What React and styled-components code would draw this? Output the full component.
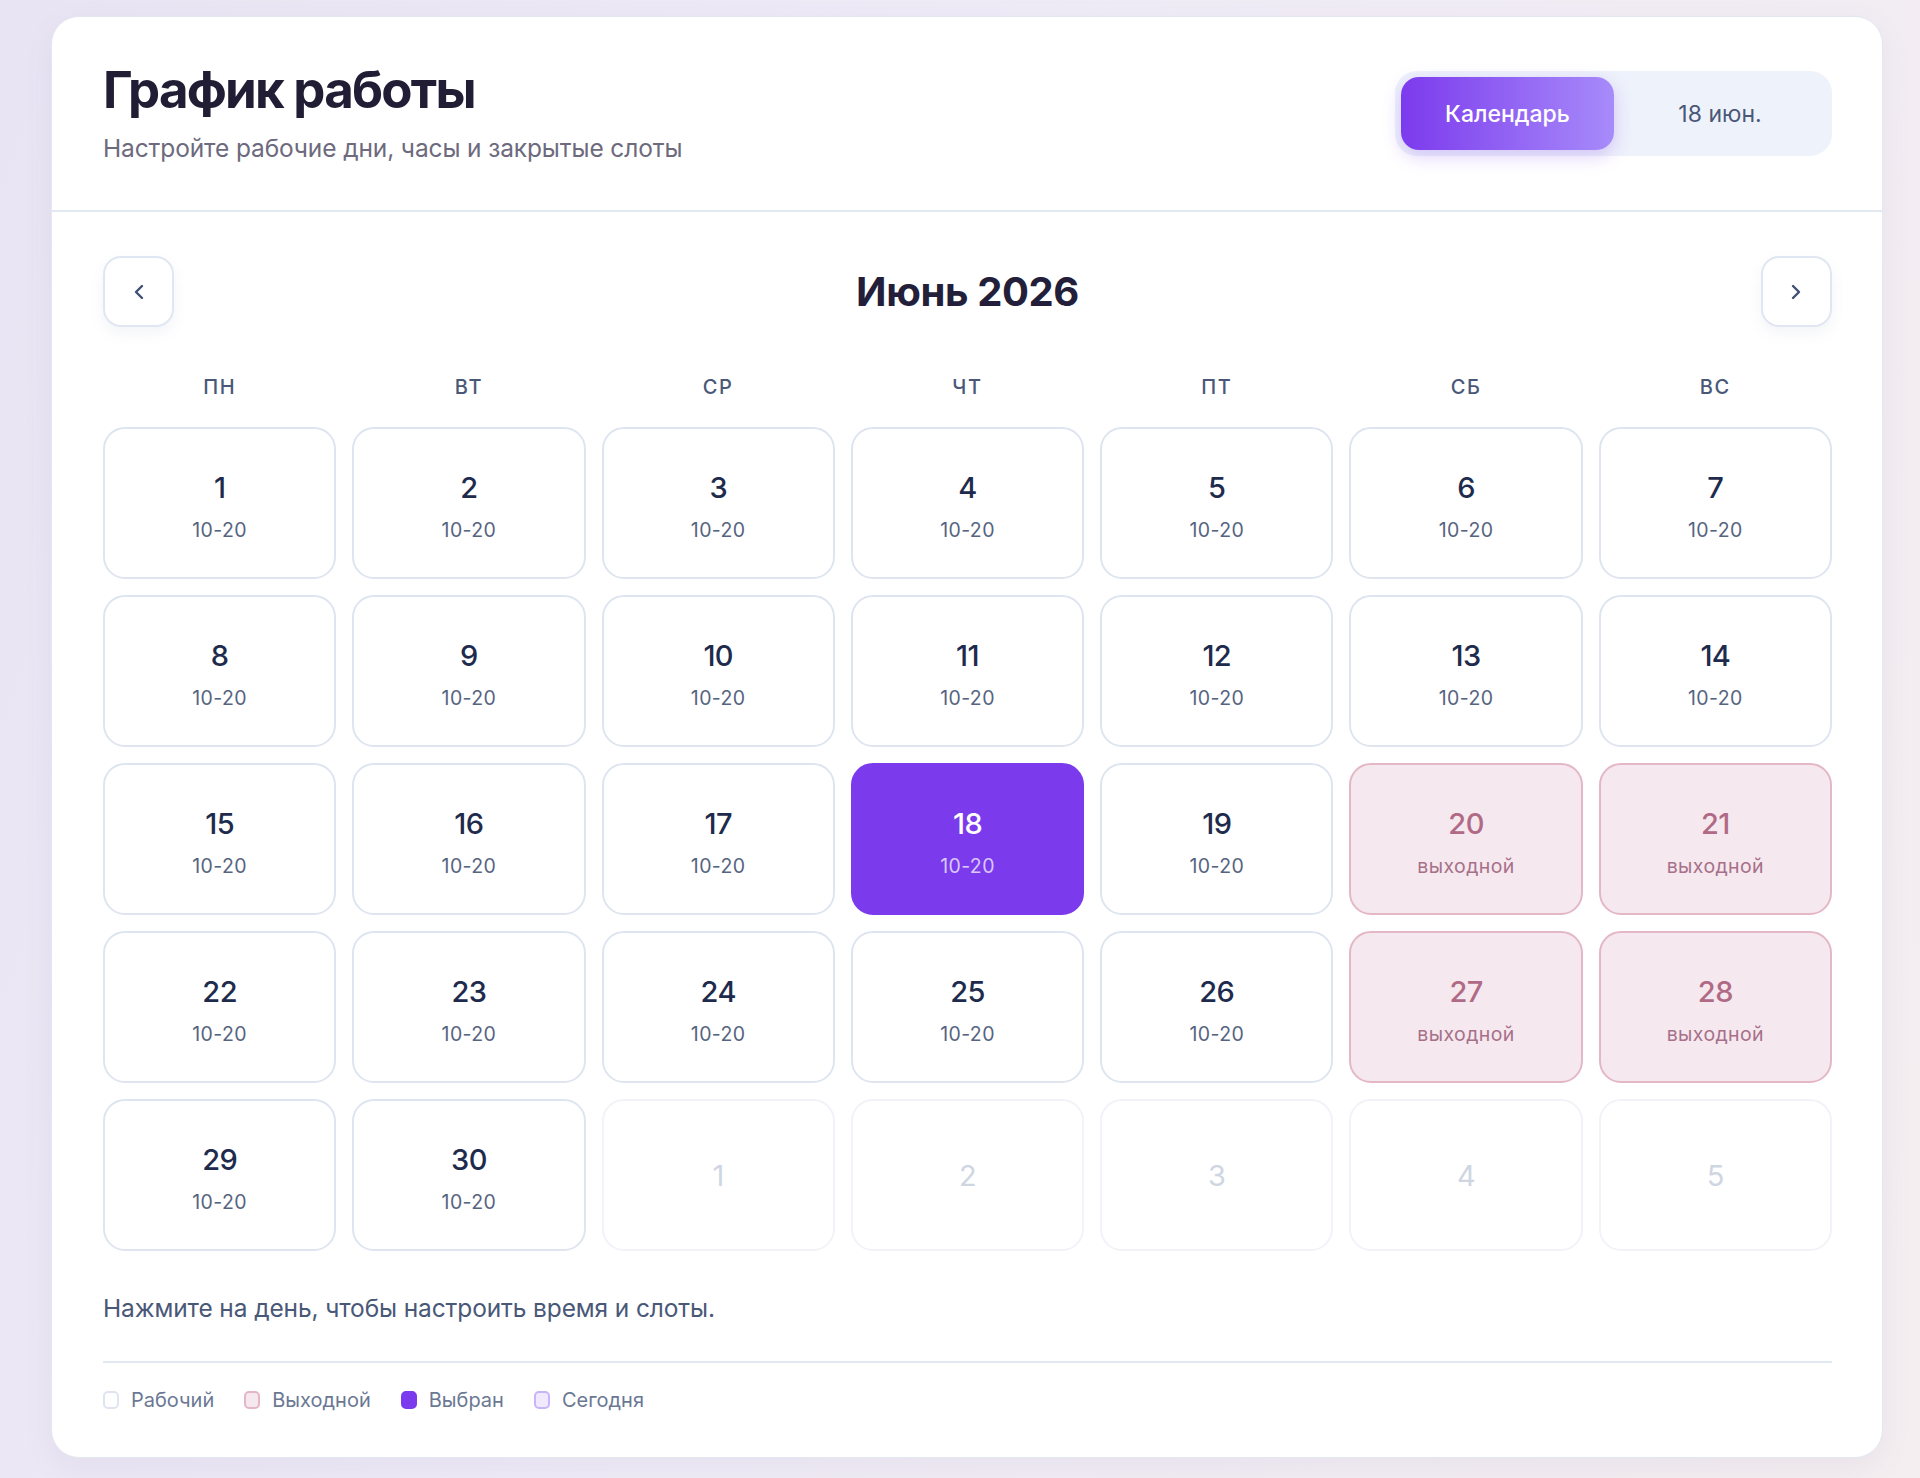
import styled, { createGlobalStyle } from "styled-components";
import { ChevronLeft, ChevronRight } from "lucide-react";

const GlobalStyle = createGlobalStyle`
  html, body {
    margin: 0;
    padding: 0;
  }
  body {
    min-height: 1478px;
    font-family: Inter, "Noto Sans", sans-serif;
    background: linear-gradient(110deg, #e9e4f3 0%, #efebf6 45%, #f4eef0 100%);
  }
`;

const Page = styled.div`
  padding: 16px 37px 18px 51px;
`;

const Card = styled.div`
  background: #ffffff;
  border: 1px solid #e3e7f0;
  border-radius: 28px;
  box-shadow: 0 10px 30px rgba(120, 100, 170, 0.08);
  overflow: hidden;
`;

const Header = styled.header`
  display: flex;
  align-items: center;
  justify-content: space-between;
  padding: 0 50px 0 51px;
  height: 193px;
  border-bottom: 2px solid #e2e8f0;
`;

const TitleBlock = styled.div`
  display: flex;
  flex-direction: column;
  gap: 14px;
  margin-top: -2px;
`;

const Title = styled.h1`
  margin: 0;
  font-size: 51px;
  font-weight: 700;
  letter-spacing: -0.035em;
  color: #211d35;
  line-height: 1.1;
`;

const Subtitle = styled.p`
  margin: 0;
  font-size: 24.5px;
  color: #6d6a7e;
  letter-spacing: -0.005em;
`;

const Toggle = styled.div`
  display: flex;
  align-items: center;
  padding: 6px;
  width: 437px;
  height: 85px;
  box-sizing: border-box;
  background: #eef2fb;
  border-radius: 22px;
`;

const ToggleButton = styled.button`
  flex: ${(p) => (p.$active ? "0 0 213px" : "1")};
  height: 100%;
  border: none;
  border-radius: 18px;
  font-family: inherit;
  font-size: 23px;
  font-weight: ${(p) => (p.$active ? 500 : 400)};
  color: ${(p) => (p.$active ? "#ffffff" : "#4a5878")};
  background: ${(p) =>
    p.$active ? "linear-gradient(90deg, #7c3aed 0%, #a78bfa 100%)" : "transparent"};
  box-shadow: ${(p) => (p.$active ? "0 6px 18px rgba(124, 58, 237, 0.25)" : "none")};
`;

const Body = styled.div`
  padding: 44px 50px 0 51px;
`;

const MonthNav = styled.div`
  display: flex;
  align-items: center;
  justify-content: space-between;
`;

const NavButton = styled.button`
  width: 71px;
  height: 71px;
  display: flex;
  align-items: center;
  justify-content: center;
  background: #ffffff;
  border: 2px solid #e1e7f2;
  border-radius: 18px;
  box-shadow: 0 6px 14px rgba(100, 116, 160, 0.08);
  color: #3e5074;
`;

const MonthTitle = styled.h2`
  margin: 0;
  font-size: 40px;
  font-weight: 700;
  color: #231f3a;
  letter-spacing: -0.01em;
`;

const Weekdays = styled.div`
  display: grid;
  grid-template-columns: repeat(7, 1fr);
  gap: 16px;
  margin-top: 48px;
  margin-bottom: 28px;
`;

const Weekday = styled.div`
  text-align: center;
  font-size: 20px;
  font-weight: 500;
  color: #4a5878;
  letter-spacing: 0.08em;
`;

const Grid = styled.div`
  display: grid;
  grid-template-columns: repeat(7, 1fr);
  grid-auto-rows: 152px;
  gap: 16px;
`;

const cellStyles = {
  work: { bg: "#ffffff", border: "#dfe5f0", num: "#1e2b4d", sub: "#56647f" },
  off: { bg: "#f5e8ee", border: "#e4b7c7", num: "#b06a86", sub: "#a77089" },
  selected: { bg: "#7c3aed", border: "#7c3aed", num: "#ffffff", sub: "#d8c8fb" },
  outside: { bg: "#ffffff", border: "#f1f3f8", num: "#cfd6e2", sub: "#cfd6e2" },
};

const Cell = styled.div`
  display: flex;
  flex-direction: column;
  align-items: center;
  justify-content: center;
  gap: 19px;
  border-radius: 22px;
  background: ${(p) => cellStyles[p.$kind].bg};
  border: 2px solid ${(p) => cellStyles[p.$kind].border};
  box-sizing: border-box;
  padding-top: ${(p) => (p.$kind === "outside" ? "0" : "8px")};
`;

const DayNum = styled.span`
  font-size: 29px;
  font-weight: ${(p) => (p.$kind === "outside" ? 400 : 500)};
  color: ${(p) => cellStyles[p.$kind].num};
  line-height: 1;
  letter-spacing: -0.02em;
`;

const DaySub = styled.span`
  font-size: 19.5px;
  color: ${(p) => cellStyles[p.$kind].sub};
  letter-spacing: 0.02em;
  line-height: 1;
`;

const Hint = styled.p`
  margin: 42px 0 0;
  font-size: 24.5px;
  color: #4a5878;
  letter-spacing: -0.005em;
`;

const Divider = styled.hr`
  margin: 38px 0 0;
  border: none;
  border-top: 2px solid #e2e8f0;
`;

const Legend = styled.div`
  display: flex;
  align-items: center;
  gap: 30px;
  padding: 25px 0 45px;
`;

const LegendItem = styled.div`
  display: flex;
  align-items: center;
  gap: 12px;
  font-size: 20px;
  color: #6b7894;
`;

const legendSwatches = {
  work: { bg: "#ffffff", border: "#dfe5f0" },
  off: { bg: "#f5e8ee", border: "#e4b7c7" },
  selected: { bg: "#7c3aed", border: "#7c3aed" },
  today: { bg: "#f1e9fe", border: "#c9b3fb" },
};

const Swatch = styled.span`
  width: 16px;
  height: 18px;
  box-sizing: border-box;
  border-radius: 5px;
  background: ${(p) => legendSwatches[p.$kind].bg};
  border: 2px solid ${(p) => legendSwatches[p.$kind].border};
`;

const weekdays = ["ПН", "ВТ", "СР", "ЧТ", "ПТ", "СБ", "ВС"];
const offDays = [20, 21, 27, 28];

const days = [];
for (let d = 1; d <= 30; d++) {
  let kind = "work";
  if (d === 18) kind = "selected";
  else if (offDays.includes(d)) kind = "off";
  days.push({ key: `d${d}`, num: d, kind });
}
for (let d = 1; d <= 5; d++) {
  days.push({ key: `n${d}`, num: d, kind: "outside" });
}

export default function App() {
  return (
    <>
      <GlobalStyle />
      <Page>
        <Card>
          <Header>
            <TitleBlock>
              <Title>График работы</Title>
              <Subtitle>Настройте рабочие дни, часы и закрытые слоты</Subtitle>
            </TitleBlock>
            <Toggle>
              <ToggleButton $active>Календарь</ToggleButton>
              <ToggleButton>18 июн.</ToggleButton>
            </Toggle>
          </Header>

          <Body>
            <MonthNav>
              <NavButton aria-label="Предыдущий месяц">
                <ChevronLeft size={24} strokeWidth={2.4} />
              </NavButton>
              <MonthTitle>Июнь 2026</MonthTitle>
              <NavButton aria-label="Следующий месяц">
                <ChevronRight size={24} strokeWidth={2.4} />
              </NavButton>
            </MonthNav>

            <Weekdays>
              {weekdays.map((w) => (
                <Weekday key={w}>{w}</Weekday>
              ))}
            </Weekdays>

            <Grid>
              {days.map((day) => (
                <Cell key={day.key} $kind={day.kind}>
                  <DayNum $kind={day.kind}>{day.num}</DayNum>
                  {day.kind !== "outside" && (
                    <DaySub $kind={day.kind}>
                      {day.kind === "off" ? "выходной" : "10-20"}
                    </DaySub>
                  )}
                </Cell>
              ))}
            </Grid>

            <Hint>Нажмите на день, чтобы настроить время и слоты.</Hint>
            <Divider />

            <Legend>
              <LegendItem>
                <Swatch $kind="work" />
                Рабочий
              </LegendItem>
              <LegendItem>
                <Swatch $kind="off" />
                Выходной
              </LegendItem>
              <LegendItem>
                <Swatch $kind="selected" />
                Выбран
              </LegendItem>
              <LegendItem>
                <Swatch $kind="today" />
                Сегодня
              </LegendItem>
            </Legend>
          </Body>
        </Card>
      </Page>
    </>
  );
}
